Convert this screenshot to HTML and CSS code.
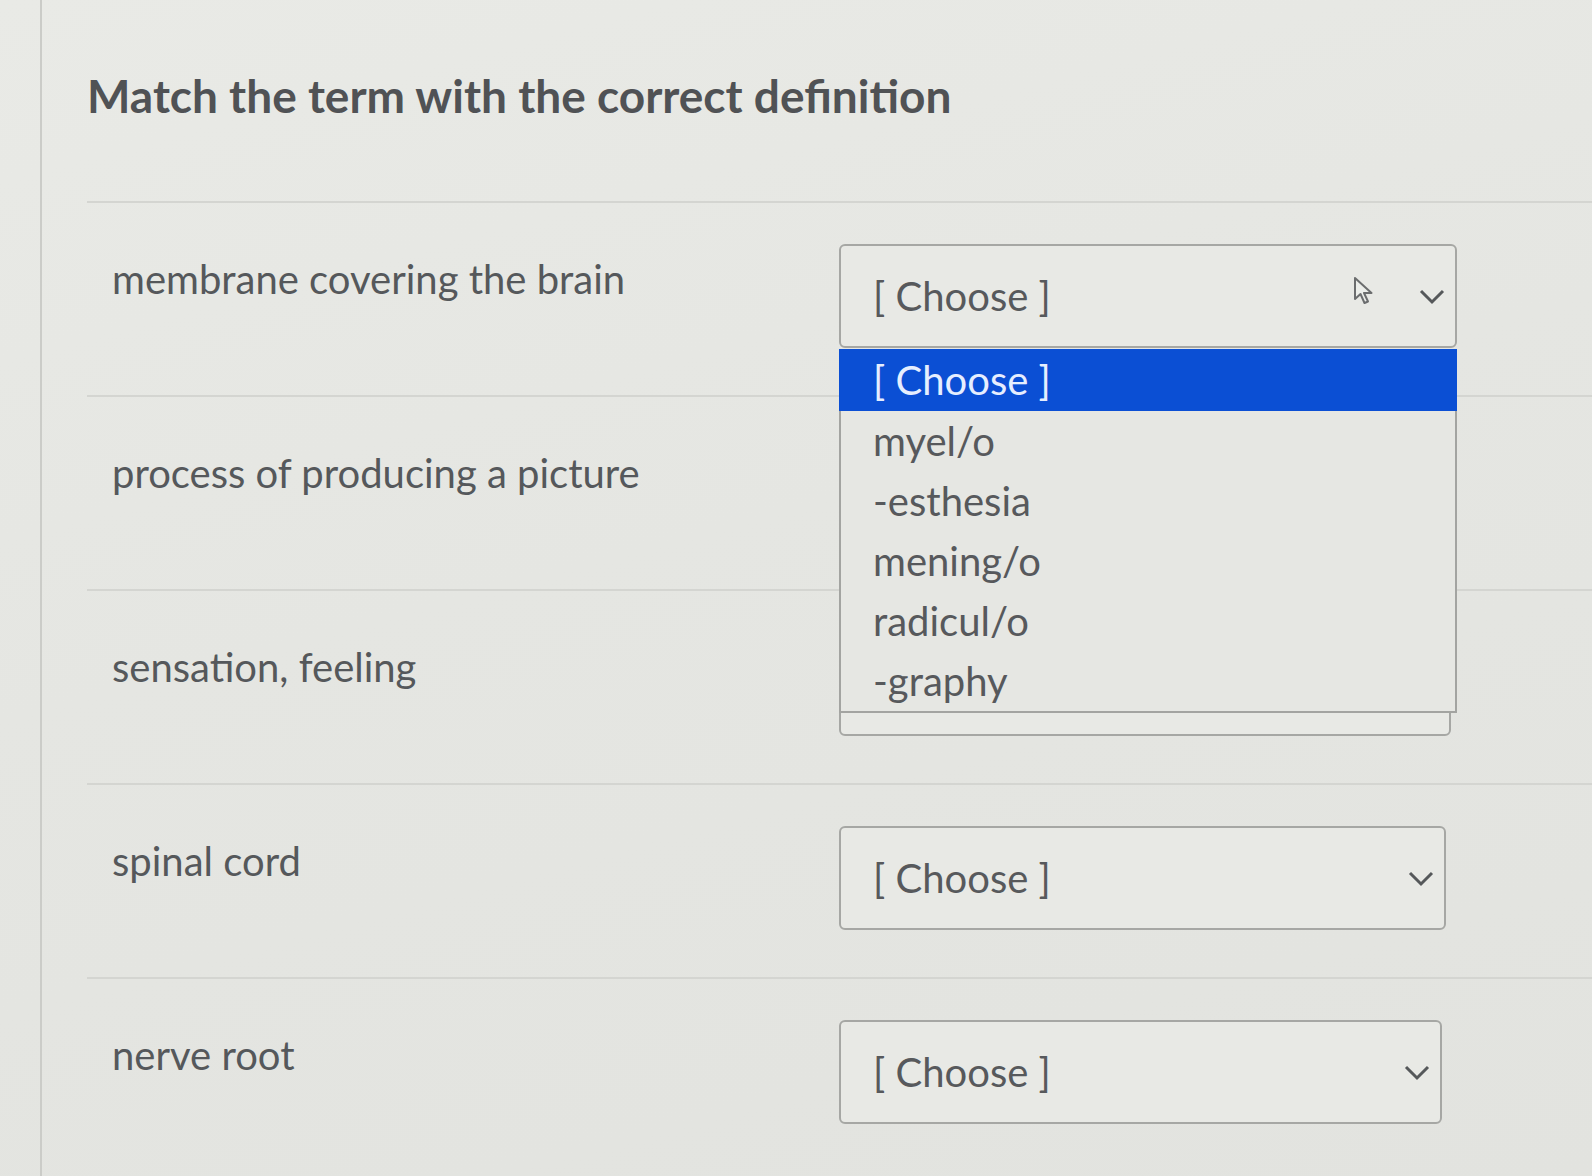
FILE: index.html
```html
<!DOCTYPE html>
<html lang="en">
<head>
<meta charset="utf-8">
<title>Match the term with the correct definition</title>
<link rel="stylesheet" href="styles.css">
</head>
<body>
<div class="page">
  <div class="content">
    <h1 class="title">Match the term with the correct definition</h1>
    <div class="rows">
      <div class="row">
        <div class="term">membrane covering the brain</div>
        <div class="select-wrap">
          <div class="select wide open">
            <span class="value">[ Choose ]</span>
            <svg class="cursor" width="24" height="30" viewBox="0 0 24 30" aria-hidden="true"><path d="M2 2 L2 23 L7.5 18 L11.5 27 L15 25.5 L11 17 L18.5 17 Z" fill="#eceeea" stroke="#6b6d6e" stroke-width="2" stroke-linejoin="round"/></svg>
            <svg class="chev" width="26" height="16" viewBox="0 0 26 16" aria-hidden="true"><polyline points="2,2 13,13 24,2" fill="none" stroke="#55585a" stroke-width="3"/></svg>
          </div>
          <ul class="popup">
            <li class="opt selected">[ Choose ]</li>
            <li class="opt">myel/o</li>
            <li class="opt">-esthesia</li>
            <li class="opt">mening/o</li>
            <li class="opt">radicul/o</li>
            <li class="opt">-graphy</li>
          </ul>
        </div>
      </div>
      <div class="row">
        <div class="term">process of producing a picture</div>
        <div class="select-wrap">
          <div class="select wide covered">
            <span class="value">[ Choose ]</span>
            <svg class="chev" width="26" height="16" viewBox="0 0 26 16" aria-hidden="true"><polyline points="2,2 13,13 24,2" fill="none" stroke="#55585a" stroke-width="3"/></svg>
          </div>
        </div>
      </div>
      <div class="row">
        <div class="term">sensation, feeling</div>
        <div class="select-wrap">
          <div class="select mid covered">
            <span class="value">[ Choose ]</span>
            <svg class="chev" width="26" height="16" viewBox="0 0 26 16" aria-hidden="true"><polyline points="2,2 13,13 24,2" fill="none" stroke="#55585a" stroke-width="3"/></svg>
          </div>
        </div>
      </div>
      <div class="row">
        <div class="term">spinal cord</div>
        <div class="select-wrap">
          <div class="select narrow">
            <span class="value">[ Choose ]</span>
            <svg class="chev" width="26" height="16" viewBox="0 0 26 16" aria-hidden="true"><polyline points="2,2 13,13 24,2" fill="none" stroke="#55585a" stroke-width="3"/></svg>
          </div>
        </div>
      </div>
      <div class="row">
        <div class="term">nerve root</div>
        <div class="select-wrap">
          <div class="select narrower">
            <span class="value">[ Choose ]</span>
            <svg class="chev" width="26" height="16" viewBox="0 0 26 16" aria-hidden="true"><polyline points="2,2 13,13 24,2" fill="none" stroke="#55585a" stroke-width="3"/></svg>
          </div>
        </div>
      </div>
    </div>
  </div>
</div>
</body>
</html>
```
FILE: styles.css
```css
html, body {
  margin: 0;
  padding: 0;
}

body {
  width: 1592px;
  height: 1176px;
  overflow: hidden;
  background: linear-gradient(165deg, #e9eae6 0%, #e5e6e2 45%, #e2e3df 100%);
  font-family: "Lato", "Open Sans", "Liberation Sans", sans-serif;
  color: #505356;
}

.page {
  padding-left: 40px;
  height: 100%;
}

.content {
  height: 100%;
  border-left: 2px solid #cbccc8;
  padding-left: 45px;
}

.title {
  margin: 0 0 79px 0;
  padding-top: 70px;
  font-size: 46px;
  line-height: 52px;
  font-weight: 700;
  color: #505255;
  letter-spacing: 0;
}

.row {
  display: grid;
  grid-template-columns: 752px 1fr;
  align-items: start;
  border-top: 2px solid #d4d5d1;
  padding: 41px 0 47px 0;
  height: 104px;
}

.term {
  padding-left: 25px;
  margin-top: 11px;
  font-size: 40px;
  line-height: 48px;
  color: #55585b;
}

.select-wrap {
  position: relative;
}

.select {
  box-sizing: border-box;
  height: 104px;
  width: 618px;
  display: flex;
  align-items: center;
  border: 2px solid #a6a7a4;
  border-radius: 6px;
  background: #e8e9e5;
  padding: 0 10px 0 32px;
  position: relative;
}

.select.mid { width: 612px; }
.select.narrow { width: 607px; }
.select.narrower { width: 603px; }

.select.covered .value,
.select.covered .chev {
  visibility: hidden;
}

.value {
  flex: 1;
  font-size: 40px;
  line-height: 48px;
  color: #57595c;
}

.chev {
  display: block;
  margin-top: 2px;
}

.cursor {
  position: absolute;
  left: 512px;
  top: 30px;
}

.popup {
  position: absolute;
  left: 0;
  top: 105px;
  z-index: 5;
  box-sizing: border-box;
  width: 618px;
  margin: 0;
  padding: 0;
  list-style: none;
  background: #e6e7e3;
  border: 2px solid #a3a4a1;
  border-top: 0;
}

.opt {
  height: 60px;
  line-height: 60px;
  padding-left: 32px;
  font-size: 40px;
  color: #57595c;
}

.opt.selected {
  height: 62px;
  line-height: 62px;
  margin: 0 -2px;
  padding-left: 34px;
  background: #0b4fd4;
  color: #e6eeff;
}
```
